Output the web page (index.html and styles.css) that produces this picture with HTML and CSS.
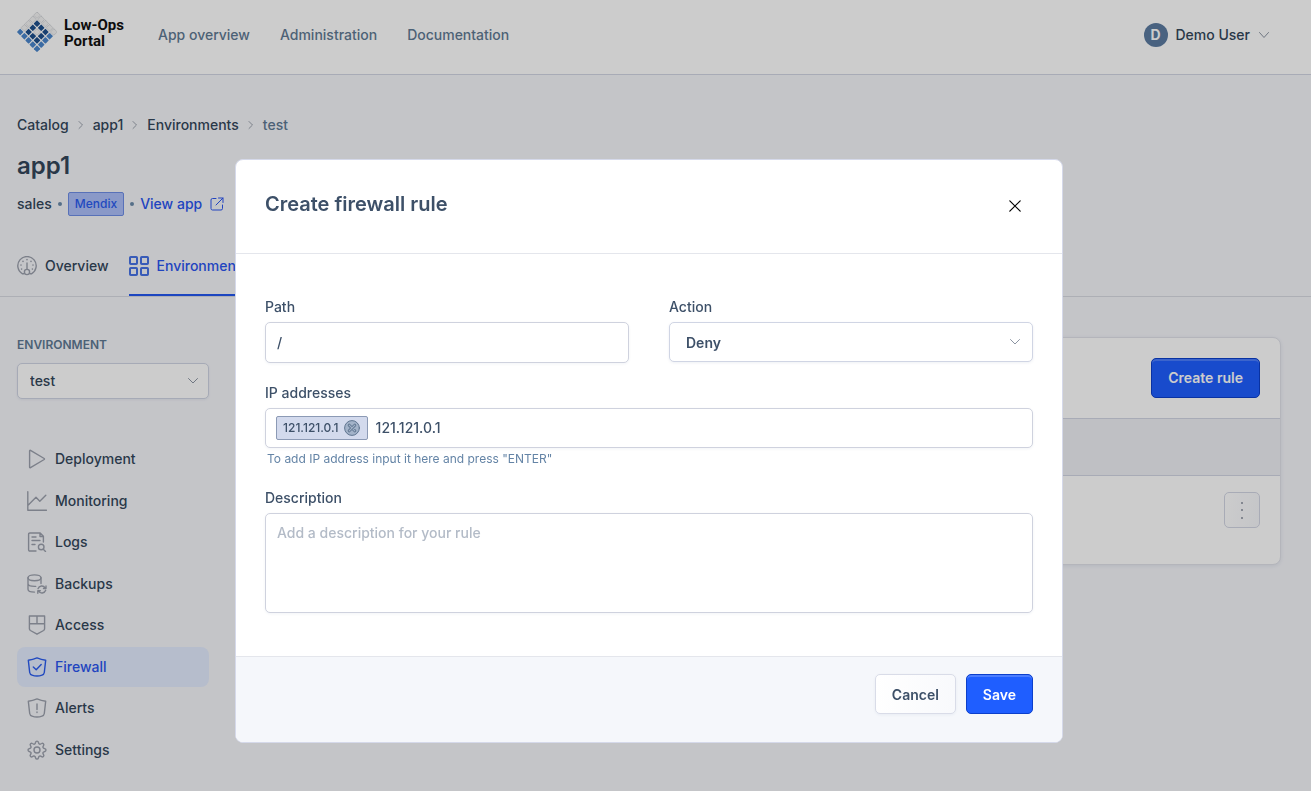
FILE: index.html
```html
<!DOCTYPE html>
<html lang="en">
<head>
<meta charset="utf-8">
<meta name="viewport" content="width=device-width, initial-scale=1">
<title>Low-Ops Portal</title>
<link rel="stylesheet" href="styles.css">
</head>
<body>
<header class="topbar">
  <a class="brand" href="#">
    <svg class="brand-mark" viewBox="0 0 40 40" aria-hidden="true">
      <defs><rect id="cell" x="-2.4" y="-2.4" width="4.8" height="4.8" rx=".5" transform="rotate(45)"/></defs>
      <g fill="#f4f4f4" stroke="#c9cdd1" stroke-width=".6">
        <use href="#cell" x="20" y="3.2"/><use href="#cell" x="24.2" y="7.4"/><use href="#cell" x="28.4" y="11.6"/><use href="#cell" x="32.6" y="15.8"/><use href="#cell" x="36.8" y="20"/>
        <use href="#cell" x="15.8" y="7.4"/><use href="#cell" x="11.6" y="11.6"/><use href="#cell" x="7.4" y="15.8"/><use href="#cell" x="20" y="20"/>
      </g>
      <g fill="#1d4f8c">
        <use href="#cell" x="20" y="11.6"/><use href="#cell" x="24.2" y="15.8"/><use href="#cell" x="28.4" y="20"/><use href="#cell" x="15.8" y="15.8"/><use href="#cell" x="11.6" y="20"/><use href="#cell" x="15.8" y="24.2"/><use href="#cell" x="24.2" y="24.2"/><use href="#cell" x="20" y="28.4"/>
      </g>
      <g fill="#4a86cc">
        <use href="#cell" x="3.2" y="20"/><use href="#cell" x="7.4" y="24.2"/><use href="#cell" x="11.6" y="28.4"/><use href="#cell" x="15.8" y="32.6"/><use href="#cell" x="20" y="36.8"/><use href="#cell" x="24.2" y="32.6"/><use href="#cell" x="28.4" y="28.4"/><use href="#cell" x="32.6" y="24.2"/>
      </g>
    </svg>
    <span class="brand-name">Low-Ops<br>Portal</span>
  </a>
  <nav class="topnav">
    <a href="#">App overview</a>
    <a href="#">Administration</a>
    <a href="#">Documentation</a>
  </nav>
  <button class="user" type="button">
    <span class="avatar">D</span>
    <span>Demo User</span>
    <svg class="chevron" viewBox="0 0 12 12" aria-hidden="true"><path d="M1.500 3.500 6 8.500l4.500-5"/></svg>
  </button>
</header>

<main>
  <section class="page-head">
    <nav class="crumbs" aria-label="Breadcrumb">
      <a href="#">Catalog</a>
      <svg viewBox="0 0 6 10" aria-hidden="true"><path d="m1 1.500 3.500 3.500-3.500 3.500"/></svg>
      <a href="#">app1</a>
      <svg viewBox="0 0 6 10" aria-hidden="true"><path d="m1 1.500 3.500 3.500-3.500 3.500"/></svg>
      <a href="#">Environments</a>
      <svg viewBox="0 0 6 10" aria-hidden="true"><path d="m1 1.500 3.500 3.500-3.500 3.500"/></svg>
      <span>test</span>
    </nav>
    <h1>app1</h1>
    <div class="meta">
      <span>sales</span>
      <i class="dot"></i>
      <span class="badge">Mendix</span>
      <i class="dot"></i>
      <a class="view-app" href="#">View app
        <svg viewBox="0 0 14 14" aria-hidden="true"><path d="M6 1.500H2.500a1.500 1.500 0 0 0-1.500 1.500v8.500A1.500 1.500 0 0 0 2.500 13H11a1.500 1.500 0 0 0 1.500-1.500V8M8.500 1H13v4.500M13 1 6 8"/></svg>
      </a>
    </div>
  </section>

  <nav class="tabs">
    <a href="#">
      <svg class="icon" viewBox="0 0 20 20" aria-hidden="true"><path d="M6.800 17.800H5.500a9.200 9.200 0 1 1 9 0h-1.300"/><circle cx="10" cy="16" r="2.600"/><path d="M10 7v6.400"/><path class="ticks" d="M10 3.600v.1M6 5.300v.1M14 5.300v.1M4 9v.1M16 9v.1M4.600 13v.1M15.400 13v.1"/></svg>
      Overview
    </a>
    <a class="active" href="#">
      <svg class="icon icon-bold" viewBox="0 0 20 20" aria-hidden="true"><rect x="1" y="1" width="7" height="7" rx=".8"/><rect x="12" y="1" width="7" height="7" rx=".8"/><rect x="1" y="12" width="7" height="7" rx=".8"/><rect x="12" y="12" width="7" height="7" rx=".8"/></svg>
      Environments
    </a>
  </nav>

  <div class="columns">
    <aside class="side">
      <label class="side-label" for="env">ENVIRONMENT</label>
      <select class="select env" id="env"><option>test</option></select>
      <nav class="sidenav">
        <a href="#"><svg class="icon" viewBox="0 0 20 20" aria-hidden="true"><path d="M2.600 1.800v16.400a.6.6 0 0 0 .9.500l13.700-8.200a.6.6 0 0 0 0-1L3.500 1.300a.6.6 0 0 0-.9.500z"/></svg>Deployment</a>
        <a href="#"><svg class="icon" viewBox="0 0 20 20" aria-hidden="true"><path d="M.8.800v18.400h18.700M.8 14.500 9 6.300l3.800 4 6-6"/></svg>Monitoring</a>
        <a href="#"><svg class="icon" viewBox="0 0 20 20" aria-hidden="true"><path d="M9 19H2.800A1.200 1.200 0 0 1 1.600 17.800V2.200A1.200 1.200 0 0 1 2.800 1h10.400l3.200 3.200V10M13 1v3.500h3.400M5 5h4M5 8.500h8M5 12.500h3"/><circle cx="14.200" cy="15" r="2.800"/><path d="m16.300 17.200 2.200 2.200"/></svg>Logs</a>
        <a href="#"><svg class="icon" viewBox="0 0 20 20" aria-hidden="true"><ellipse cx="7.500" cy="3.800" rx="6.500" ry="2.900"/><path d="M1 3.800v11.400c0 1.600 2.900 2.900 6.500 2.900M14 3.800v5.700M1 9.500c0 1.600 2.900 2.900 6.500 2.900h1.200"/><path d="M11 14.700a4 4 0 0 1 7.200-.7M19 12v2.500h-2.500M18.700 16.300a4 4 0 0 1-7.200.7M10.800 19.200v-2.500h2.500"/></svg>Backups</a>
        <a href="#"><svg class="icon" viewBox="0 0 20 20" aria-hidden="true"><path d="M2.400 1h15.200v12.800c0 .8-.4 1.300-1 1.700L10 19.200l-6.600-3.700c-.6-.4-1-.9-1-1.700zM2.400 8.800h15.200M10 1v7.800"/></svg>Access</a>
        <a class="active" href="#"><svg class="icon" viewBox="0 0 20 20" aria-hidden="true"><path d="M1.300 3.200C4.500 2.900 7.500 2 10 .9c2.500 1.100 5.500 2 8.700 2.300l-1.400 12.300c-.2 1.500-1 2.200-2.300 2.600-3.300 1.200-6.700 1.200-10 0-1.300-.4-2.100-1.100-2.300-2.600z"/><path d="m6.300 10 2.900 2.800 5-5.300"/></svg>Firewall</a>
        <a href="#"><svg class="icon" viewBox="0 0 20 20" aria-hidden="true"><path d="M1.300 3.200C4.500 2.900 7.500 2 10 .9c2.500 1.100 5.500 2 8.700 2.300l-1.400 12.300c-.2 1.500-1 2.200-2.300 2.600-3.300 1.200-6.700 1.200-10 0-1.300-.4-2.100-1.100-2.300-2.600z"/><path d="M10 6v5.500M10 14v.6"/></svg>Alerts</a>
        <a href="#"><svg class="icon" viewBox="0 0 20 20" aria-hidden="true"><circle cx="10" cy="10" r="3"/><path d="M8.600 2.200a1.450 1.450 0 0 1 2.800 0l.3 1a1.400 1.400 0 0 0 2 .8l.9-.5a1.450 1.450 0 0 1 2 2l-.5.900a1.400 1.400 0 0 0 .8 2l1 .3a1.450 1.450 0 0 1 0 2.800l-1 .3a1.400 1.400 0 0 0-.8 2l.5.900a1.450 1.450 0 0 1-2 2l-.9-.5a1.400 1.400 0 0 0-2 .8l-.3 1a1.450 1.450 0 0 1-2.800 0l-.3-1a1.400 1.400 0 0 0-2-.8l-.9.500a1.450 1.450 0 0 1-2-2l.5-.9a1.400 1.400 0 0 0-.8-2l-1-.3a1.450 1.450 0 0 1 0-2.800l1-.3a1.400 1.400 0 0 0 .8-2l-.5-.9a1.450 1.450 0 0 1 2-2l.9.500a1.400 1.400 0 0 0 2-.8z"/></svg>Settings</a>
      </nav>
    </aside>

    <section class="card">
      <div class="card-head"><button class="btn btn-primary" type="button">Create rule</button></div>
      <table class="rules">
        <thead><tr><th></th></tr></thead>
        <tbody><tr><td>
          <button class="row-menu" type="button" aria-label="Rule actions"><i></i><i></i><i></i></button>
        </td></tr></tbody>
      </table>
    </section>
  </div>
</main>

<div class="overlay">
  <form class="modal" role="dialog" aria-labelledby="dialog-title">
    <div class="modal-head">
      <h2 id="dialog-title">Create firewall rule</h2>
      <button class="close" type="button" aria-label="Close"><svg viewBox="0 0 12 12" aria-hidden="true"><path d="m.8.800 10.400 10.400M11.200.800.800 11.200"/></svg></button>
    </div>
    <div class="modal-body">
      <div class="pair">
        <div class="field">
          <label for="path">Path</label>
          <input class="control" id="path" type="text" value="/">
        </div>
        <div class="field">
          <label for="action">Action</label>
          <select class="select action" id="action"><option>Deny</option></select>
        </div>
      </div>
      <div class="field">
        <label for="ip">IP addresses</label>
        <div class="tag-box">
          <span class="tag">121.121.0.1
            <button type="button" aria-label="Remove 121.121.0.1"><svg viewBox="0 0 16 16" aria-hidden="true"><circle cx="8" cy="8" r="7.400"/><path class="x-wide" d="m5.200 5.200 5.600 5.600M10.800 5.200l-5.600 5.600"/><path class="x-core" d="m5.200 5.200 5.600 5.600M10.800 5.200l-5.600 5.600"/></svg></button>
          </span>
          <input id="ip" type="text" value="121.121.0.1">
        </div>
        <p class="hint">To add IP address input it here and press "ENTER"</p>
      </div>
      <div class="field">
        <label for="desc">Description</label>
        <textarea class="control" id="desc" placeholder="Add a description for your rule"></textarea>
      </div>
    </div>
    <div class="modal-foot">
      <button class="btn btn-plain" type="button">Cancel</button>
      <button class="btn btn-primary" type="submit">Save</button>
    </div>
  </form>
</div>
</body>
</html>
```
FILE: styles.css
```css
* { box-sizing: border-box; }

body {
  margin: 0;
  min-height: 100vh;
  background: #f6f7fb;
  color: #34475a;
  font: 14px/20px Inter, "Liberation Sans", sans-serif;
}

a { color: inherit; text-decoration: none; }
button, input, select, textarea { font: inherit; color: inherit; }
button { cursor: pointer; }
svg { display: block; flex: none; fill: none; stroke: currentColor; stroke-linecap: round; stroke-linejoin: round; }
h1, h2, p { margin: 0; }

/* Top bar */
.topbar {
  display: flex;
  align-items: center;
  height: 75px;
  padding: 0 41px 4px 17px;
  background: #fff;
  border-bottom: 1px solid #d3d6e4;
}
.brand { display: flex; align-items: center; gap: 7px; margin-top: -6px; }
.brand-mark { width: 40px; height: 40px; stroke: none; }
.brand-name { padding-top: 1px; color: #111; font: 700 15px/16px Roboto, sans-serif; }
.topnav { display: flex; gap: 30px; margin-left: 34px; color: #5f7a94; font-weight: 500; }
.user {
  display: flex;
  align-items: center;
  gap: 8px;
  margin-left: auto;
  padding: 0;
  border: 0;
  background: none;
  font-weight: 500;
}
.avatar {
  width: 24px;
  height: 24px;
  border-radius: 50%;
  background: #5c7ba0;
  color: #fff;
  font-weight: 700;
  line-height: 24px;
}
.chevron { width: 12px; height: 12px; color: #8c95a3; }

/* Page head */
.page-head { padding: 40px 17px 0; }
.crumbs { display: flex; align-items: center; gap: 9px; font-weight: 500; }
.crumbs svg { width: 6px; height: 10px; color: #9aa1ad; }
.crumbs span { color: #5f7a94; }
h1 { margin-top: 15px; font-size: 24px; line-height: 32px; font-weight: 600; }
.meta { display: flex; align-items: center; gap: 6px; margin-top: 10px; font-weight: 500; }
.dot { width: 4px; height: 4px; border-radius: 50%; background: #6b8bab; }
.badge {
  padding: 0 6px;
  border: 1px solid #6f8ee6;
  border-radius: 2px;
  background: #adc0fa;
  color: #2a5cf0;
  font-size: 12px;
  line-height: 22px;
}
.view-app { display: flex; align-items: center; gap: 8px; color: #2a55f0; }
.view-app svg { width: 14px; height: 14px; }

/* Tabs */
.tabs { display: flex; gap: 20px; margin-top: 30px; padding: 0 17px; border-bottom: 1px solid #d9dbe3; font-weight: 500; }
.tabs a { display: flex; align-items: center; gap: 8px; height: 50px; padding-bottom: 9px; border-bottom: 2px solid transparent; }
.tabs .active { color: #2a55f0; border-color: #2458f0; }
.icon { width: 20px; height: 20px; color: #9ca1ad; stroke-width: 1.4; }
.icon-bold { stroke-width: 2; }
.ticks { stroke-width: 1.6; }
.active .icon { color: #2a5cf0; }
.active .icon-bold { color: #4672e6; }

/* Content columns */
.columns { display: grid; grid-template-columns: 192px 1fr; gap: 30px; align-items: start; padding: 40px 30px 0 17px; }
.side-label { display: block; margin-bottom: 10px; line-height: 16px; font-size: 12px; font-weight: 600; color: #5f7a94; }
.select {
  appearance: none;
  display: block;
  width: 100%;
  border: 1px solid #d0d5e4;
  border-radius: 5px;
  background: #fff url("data:image/svg+xml,%3Csvg xmlns='http://www.w3.org/2000/svg' viewBox='0 0 12 12' fill='none' stroke='%238c95a3' stroke-linecap='round'%3E%3Cpath d='M1.500 3.500 6 8l4.500-4.500'/%3E%3C/svg%3E") no-repeat right 9px center / 12px 12px;
  box-shadow: 0 1px 3px rgba(40, 60, 120, .08);
}
.env { height: 36px; padding: 0 12px; font-weight: 500; }
.sidenav { display: flex; flex-direction: column; justify-content: space-between; min-height: 331px; margin-top: 40px; font-weight: 500; }
.sidenav a { display: flex; align-items: center; gap: 8px; height: 40px; padding: 0 10px; border-radius: 8px; }
.sidenav .active { background: #e4edff; color: #2a55f0; }

.card { overflow: hidden; border: 1px solid #e1e3ea; border-radius: 8px; background: #fff; box-shadow: 0 1px 4px rgba(40, 60, 120, .1); }
.card-head { display: flex; justify-content: flex-end; padding: 20px; }
.rules { width: 100%; border-collapse: collapse; }
.rules th { height: 57px; padding: 0; background: #eff1f6; border: solid #d3d6e4; border-width: 1px 0; }
.rules td { height: 88px; padding: 16px 20px; vertical-align: top; }
.row-menu {
  display: flex;
  flex-direction: column;
  align-items: center;
  justify-content: space-evenly;
  width: 36px;
  height: 36px;
  margin-left: auto;
  padding: 3px 0;
  border: 1px solid #d3d6e4;
  border-radius: 5px;
  background: linear-gradient(100deg, #fff, #f6f7fb);
}
.row-menu i { width: 2px; height: 2px; background: #a4a9b4; }

.btn { height: 40px; padding: 0 16px; border: 1px solid; border-radius: 5px; font-weight: 600; }
.modal-foot .btn { padding-top: 1px; }
.btn-primary { background: #1f5eff; border-color: #0c3fcb; color: #fff; box-shadow: inset 0 2px 0 #4a7dff; }
.btn-plain { background: linear-gradient(100deg, #fff, #f8f9fc); border-color: #d9dce8; color: #3d5068; box-shadow: 0 1px 3px rgba(40, 60, 120, .06); }

/* Dialog */
.overlay { position: fixed; inset: 0; overflow: auto; padding: 159px 13px 48px 0; background: rgba(0, 0, 0, .2); }
.modal {
  width: min(828px, 100%);
  margin: 0 auto;
  overflow: hidden;
  border: 1px solid #d5d9ea;
  border-radius: 8px;
  background: #fff;
  color: #3d5068;
}
.modal-head { display: flex; align-items: center; justify-content: space-between; height: 94px; padding: 0 38px 4px 29px; border-bottom: 1px solid #e4e6ec; }
h2 { padding-bottom: 2px; font-size: 20px; line-height: 28px; font-weight: 600; }
.close { padding: 4px 3px 2px; border: 0; background: none; color: #000; }
.close svg { width: 12px; height: 12px; stroke-width: 1.200; }
.modal-body { display: grid; gap: 20px; padding: 43px 29px; }
.pair { display: grid; grid-template-columns: 1fr 1fr; gap: 40px; align-items: start; }
.field label { display: block; margin-bottom: 5px; font-weight: 500; }
.control, .tag-box { display: block; width: 100%; border: 1px solid #cfd2de; border-radius: 5px; background: #fff; box-shadow: 0 1px 3px rgba(40, 60, 120, .06); }
.control { height: 41px; padding: 0 11px; font-weight: 500; }
.action { height: 40px; padding: 1px 16px 0; font-weight: 600; background-position: right 11px center; }
.tag-box { display: flex; align-items: center; gap: 8px; height: 40px; padding: 0 10px; font-weight: 500; }
.tag { display: flex; align-items: center; gap: 5px; padding: 0 7px 0 6px; border: 1px solid #8c9ab5; border-radius: 2px; background: #d3daed; font-size: 12px; line-height: 22px; }
.tag button { padding: 0; border: 0; background: none; color: #5f7590; }
.tag svg { width: 16px; height: 16px; }
.tag circle { fill: #a3b3c9; }
.x-wide { stroke-width: 3; }
.x-core { stroke: #a3b3c9; stroke-width: 1.200; }
.tag-box input { flex: 1; min-width: 0; padding: 0; border: 0; outline: 0; background: none; }
.hint { margin: 3px 2px 0; padding-bottom: 1px; color: #6484a6; font-size: 12px; line-height: 16px; }
textarea.control { height: 100px; padding: 9px 11px; resize: none; }
textarea::placeholder { color: #b3bbc7; }
.modal-foot { display: flex; justify-content: flex-end; gap: 10px; padding: 17px 29px 28px; background: #f5f7fb; border-top: 1px solid #e4e6ec; }
```
